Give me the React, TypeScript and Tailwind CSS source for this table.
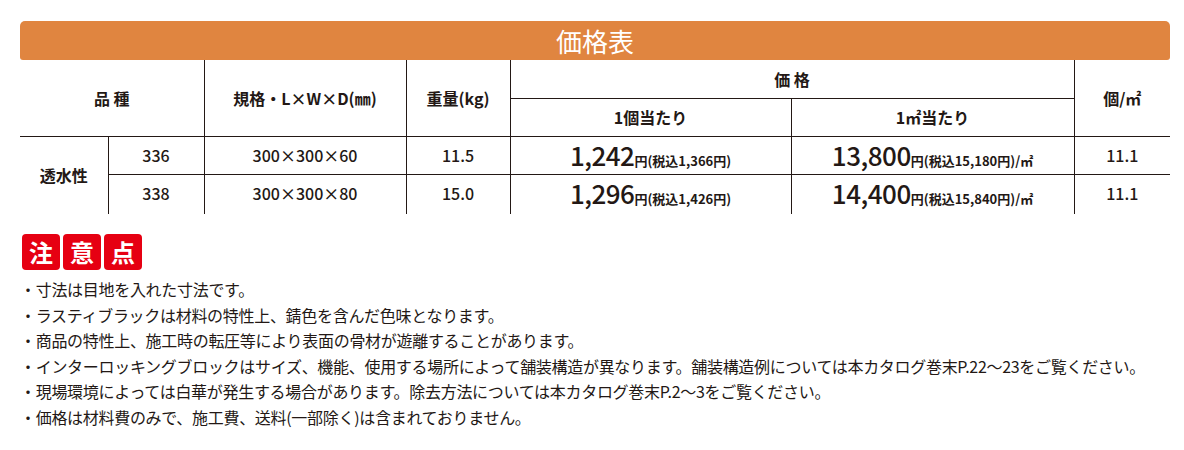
import React from "react";

const font = { fontFamily: '"Noto Sans CJK JP", "Noto Sans", sans-serif' };

const rows = [
  { code: "336", size: "300×300×60", weight: "11.5", unit: "1,242", unitTax: "1,366", sq: "13,800", sqTax: "15,180", per: "11.1" },
  { code: "338", size: "300×300×80", weight: "15.0", unit: "1,296", unitTax: "1,426", sq: "14,400", sqTax: "15,840", per: "11.1" },
];

const notes = [
  "・寸法は目地を入れた寸法です。",
  "・ラスティブラックは材料の特性上、錆色を含んだ色味となります。",
  "・商品の特性上、施工時の転圧等により表面の骨材が遊離することがあります。",
  "・インターロッキングブロックはサイズ、機能、使用する場所によって舗装構造が異なります。舗装構造例については本カタログ巻末P.22〜23をご覧ください。",
  "・現場環境によっては白華が発生する場合があります。除去方法については本カタログ巻末P.2〜3をご覧ください。",
  "・価格は材料費のみで、施工費、送料(一部除く)は含まれておりません。",
];

function Price({ main, tax, sq }: { main: string; tax: string; sq?: boolean }) {
  return (
    <span className="inline-flex items-baseline">
      <span className="text-[26px] font-medium tracking-[-0.5px] leading-none">{main}</span>
      <span className="text-[13px] font-bold leading-none">円(税込{tax}円){sq ? "/㎡" : ""}</span>
    </span>
  );
}

export default function App() {
  return (
    <div className="w-[1184px] h-[450px] bg-white text-[#231815] pt-[21px] px-[20px]" style={font}>
      <div className="w-[1150px] h-[39px] bg-[#e08540] rounded-t-[5px] rounded-b-[3px] flex items-center justify-center">
        <span className="text-white text-[26px] leading-none">価格表</span>
      </div>

      <table className="w-[1150px] border-collapse table-fixed text-[16px]">
        <colgroup>
          <col className="w-[88px]" />
          <col className="w-[96px]" />
          <col className="w-[202px]" />
          <col className="w-[104px]" />
          <col className="w-[281px]" />
          <col className="w-[283px]" />
          <col className="w-[96px]" />
        </colgroup>
        <thead>
          <tr className="h-[38px]">
            <th colSpan={2} rowSpan={2} className="font-bold border-r border-[#231815]">品 種</th>
            <th rowSpan={2} className="font-bold border-r border-[#231815]">規格・L×W×D(㎜)</th>
            <th rowSpan={2} className="font-bold border-r border-[#231815]">重量(kg)</th>
            <th colSpan={2} className="font-bold border-r border-b border-[#231815]">価 格</th>
            <th rowSpan={2} className="font-bold">個/㎡</th>
          </tr>
          <tr className="h-[38px]">
            <th className="font-bold border-r border-[#231815]">1個当たり</th>
            <th className="font-bold border-r border-[#231815]">1㎡当たり</th>
          </tr>
        </thead>
        <tbody>
          {rows.map((r, i) => (
            <tr key={r.code} className={i === 0 ? "h-[38px] border-t border-[#231815]" : "h-[40px] border-t border-[#231815]"}>
              {i === 0 && (
                <td rowSpan={2} className="text-center font-bold border-r border-[#231815]">透水性</td>
              )}
              <td className="text-center font-medium border-r border-[#231815] align-top pt-[6px]">{r.code}</td>
              <td className="text-center font-medium border-r border-[#231815] align-top pt-[6px]">{r.size}</td>
              <td className="text-center font-medium border-r border-[#231815] align-top pt-[6px]">{r.weight}</td>
              <td className="text-center border-r border-[#231815] align-top pt-[5px]">
                <Price main={r.unit} tax={r.unitTax} />
              </td>
              <td className="text-center border-r border-[#231815] align-top pt-[5px]">
                <Price main={r.sq} tax={r.sqTax} sq />
              </td>
              <td className="text-center font-medium align-top pt-[6px]">{r.per}</td>
            </tr>
          ))}
        </tbody>
      </table>

      <div className="flex gap-[3px] mt-[20px] ml-[2px]">
        {["注", "意", "点"].map((c) => (
          <div key={c} className="w-[38px] h-[36px] bg-[#e60012] rounded-[4px] flex items-center justify-center text-white text-[24px] font-bold leading-none">
            {c}
          </div>
        ))}
      </div>

      <div className="mt-[7px] text-[16px] leading-[25.6px] tracking-[-0.3px]">
        {notes.map((n) => (
          <p key={n}>{n}</p>
        ))}
      </div>
    </div>
  );
}
